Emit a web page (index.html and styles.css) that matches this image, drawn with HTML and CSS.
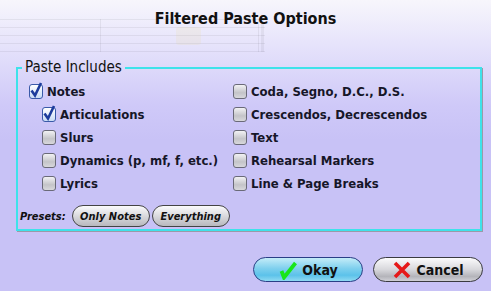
FILE: index.html
```html
<!DOCTYPE html>
<html lang="en">
<head>
  <meta charset="UTF-8" />
  <title>Filtered Paste Options</title>
  <link rel="stylesheet" href="styles.css">
</head>
<body>
  <svg class="staff" viewBox="0 0 270 56" width="270" height="56">
    <g stroke="#000" stroke-opacity="0.06" stroke-width="1">
      <path d="M0 19.5H265M0 27.5H265M0 35.5H265M0 43.5H265M0 51.5H265"/>
      <path d="M100.5 19V52M258.5 19V52"/>
    </g>
    <rect x="261" y="19" width="3" height="33" fill="#000" fill-opacity="0.05"/>
    <rect x="176" y="27" width="25" height="18" rx="3" fill="#e8d860" fill-opacity="0.1"/>
  </svg>

  <div class="header">Filtered Paste Options</div>

  <fieldset class="includes">
    <legend>Paste Includes</legend>
    <div class="options">
      <div class="col">
        <label class="opt"><span class="box checked"><svg viewBox="0 0 14 14" width="14" height="14"><path d="M2.5 6.5 L6 11.5 L12 -1" fill="none" stroke="#1d3c9c" stroke-width="2.6"/></svg></span>Notes</label>
        <label class="opt sub"><span class="box checked"><svg viewBox="0 0 14 14" width="14" height="14"><path d="M2.5 6.5 L6 11.5 L12 -1" fill="none" stroke="#1d3c9c" stroke-width="2.6"/></svg></span>Articulations</label>
        <label class="opt sub"><span class="box"></span>Slurs</label>
        <label class="opt sub"><span class="box"></span>Dynamics (p, mf, f, etc.)</label>
        <label class="opt sub"><span class="box"></span>Lyrics</label>
      </div>
      <div class="col">
        <label class="opt"><span class="box"></span>Coda, Segno, D.C., D.S.</label>
        <label class="opt"><span class="box"></span>Crescendos, Decrescendos</label>
        <label class="opt"><span class="box"></span>Text</label>
        <label class="opt"><span class="box"></span>Rehearsal Markers</label>
        <label class="opt"><span class="box"></span>Line &amp; Page Breaks</label>
      </div>
    </div>
    <div class="presets">
      <span class="presets-label">Presets:</span>
      <button class="pill">Only Notes</button>
      <button class="pill">Everything</button>
    </div>
  </fieldset>

  <div class="footer">
    <button class="btn okay">
      <svg viewBox="0 0 20 20" width="20" height="20"><path d="M3.5 11 L6 17.5 L17.5 3" fill="none" stroke="#19e619" stroke-width="3.8" stroke-linejoin="miter"/></svg>
      Okay
    </button>
    <button class="btn cancel">
      <svg viewBox="0 0 20 20" width="20" height="20"><path d="M3 3 L17 17 M17 3 L3 17" fill="none" stroke="#e61919" stroke-width="3.6"/></svg>
      Cancel
    </button>
  </div>
</body>
</html>
```
FILE: styles.css
```css
html, body {
  margin: 0;
  padding: 0;
  width: 491px;
  height: 291px;
  overflow: hidden;
}

body {
  position: relative;
  display: flex;
  flex-direction: column;
  font-family: "DejaVu Sans Condensed", "DejaVu Sans", sans-serif;
  color: #111;
  background: linear-gradient(to bottom, #f7f6fc 0px, #e6e3fb 45px, #cfc9f8 105px, #c8c2f6 140px, #c8c2f6 100%);
}

.staff {
  position: absolute;
  top: 0;
  left: 0;
  pointer-events: none;
}

.header {
  position: relative;
  height: 60px;
  padding-top: 9px;
  box-sizing: border-box;
  text-align: center;
  font-size: 16px;
  font-weight: bold;
}

.includes {
  margin: 0 9px 0 16px;
  padding: 5px 0 0 0;
  min-width: 0;
  height: 171px;
  box-sizing: border-box;
  border: 2px solid #3ee2ea;
  box-shadow: 1px 1px 0 #9a9aa8;
}

.includes legend {
  margin-left: 4px;
  padding: 0 3px;
  font-size: 15px;
  line-height: 15px;
}

.options {
  display: flex;
  padding-left: 11px;
}

.col {
  display: flex;
  flex-direction: column;
}

.col:first-child {
  width: 204px;
}

.opt {
  display: flex;
  align-items: center;
  gap: 4px;
  height: 23px;
  font-size: 13px;
  font-weight: bold;
  color: #161628;
}

.opt.sub {
  padding-left: 13px;
}

.box {
  position: relative;
  width: 12px;
  height: 13px;
  border: 1px solid #6a6a78;
  border-radius: 3px;
  background: linear-gradient(to bottom, #f2f2f4, #c4c4c8 60%, #d8d8dc);
}

.box.checked {
  border-color: #3a5aa8;
  background: linear-gradient(to bottom, #ffffff, #c9dcf5);
}

.box svg {
  position: absolute;
  left: -1px;
  top: -1px;
  overflow: visible;
}

.presets {
  display: flex;
  align-items: center;
  gap: 2px;
  margin-top: 10px;
  padding-left: 2px;
}

.presets-label {
  font-size: 11px;
  font-weight: bold;
  font-style: italic;
  margin-right: 4px;
}

.pill {
  height: 22px;
  width: 78px;
  padding: 0;
  border: 1px solid #444;
  border-radius: 11px;
  background: linear-gradient(to bottom, #fbfbfc, #d6d6da 55%, #b8b8be);
  font-family: "DejaVu Sans Condensed", "DejaVu Sans", sans-serif;
  font-size: 11px;
  font-weight: bold;
  font-style: italic;
  color: #111;
}

.footer {
  display: flex;
  justify-content: flex-end;
  gap: 10px;
  padding: 26px 8px 0 0;
}

.btn {
  display: flex;
  align-items: center;
  justify-content: center;
  gap: 4px;
  width: 110px;
  height: 25px;
  padding: 0;
  border-radius: 13px;
  font-family: "DejaVu Sans Condensed", "DejaVu Sans", sans-serif;
  font-size: 14px;
  font-weight: bold;
  color: #111;
}

.btn.okay {
  border: 1px solid #2a3f86;
  background: linear-gradient(to bottom, #c4ecf8, #7fd0ee 45%, #5cc2ea 75%, #8fdaf2);
}

.btn.cancel {
  border: 1px solid #3a3a40;
  background: linear-gradient(to bottom, #fbfbfc, #d8d8dc 50%, #b4b4ba 80%, #d0d0d6);
}
```
